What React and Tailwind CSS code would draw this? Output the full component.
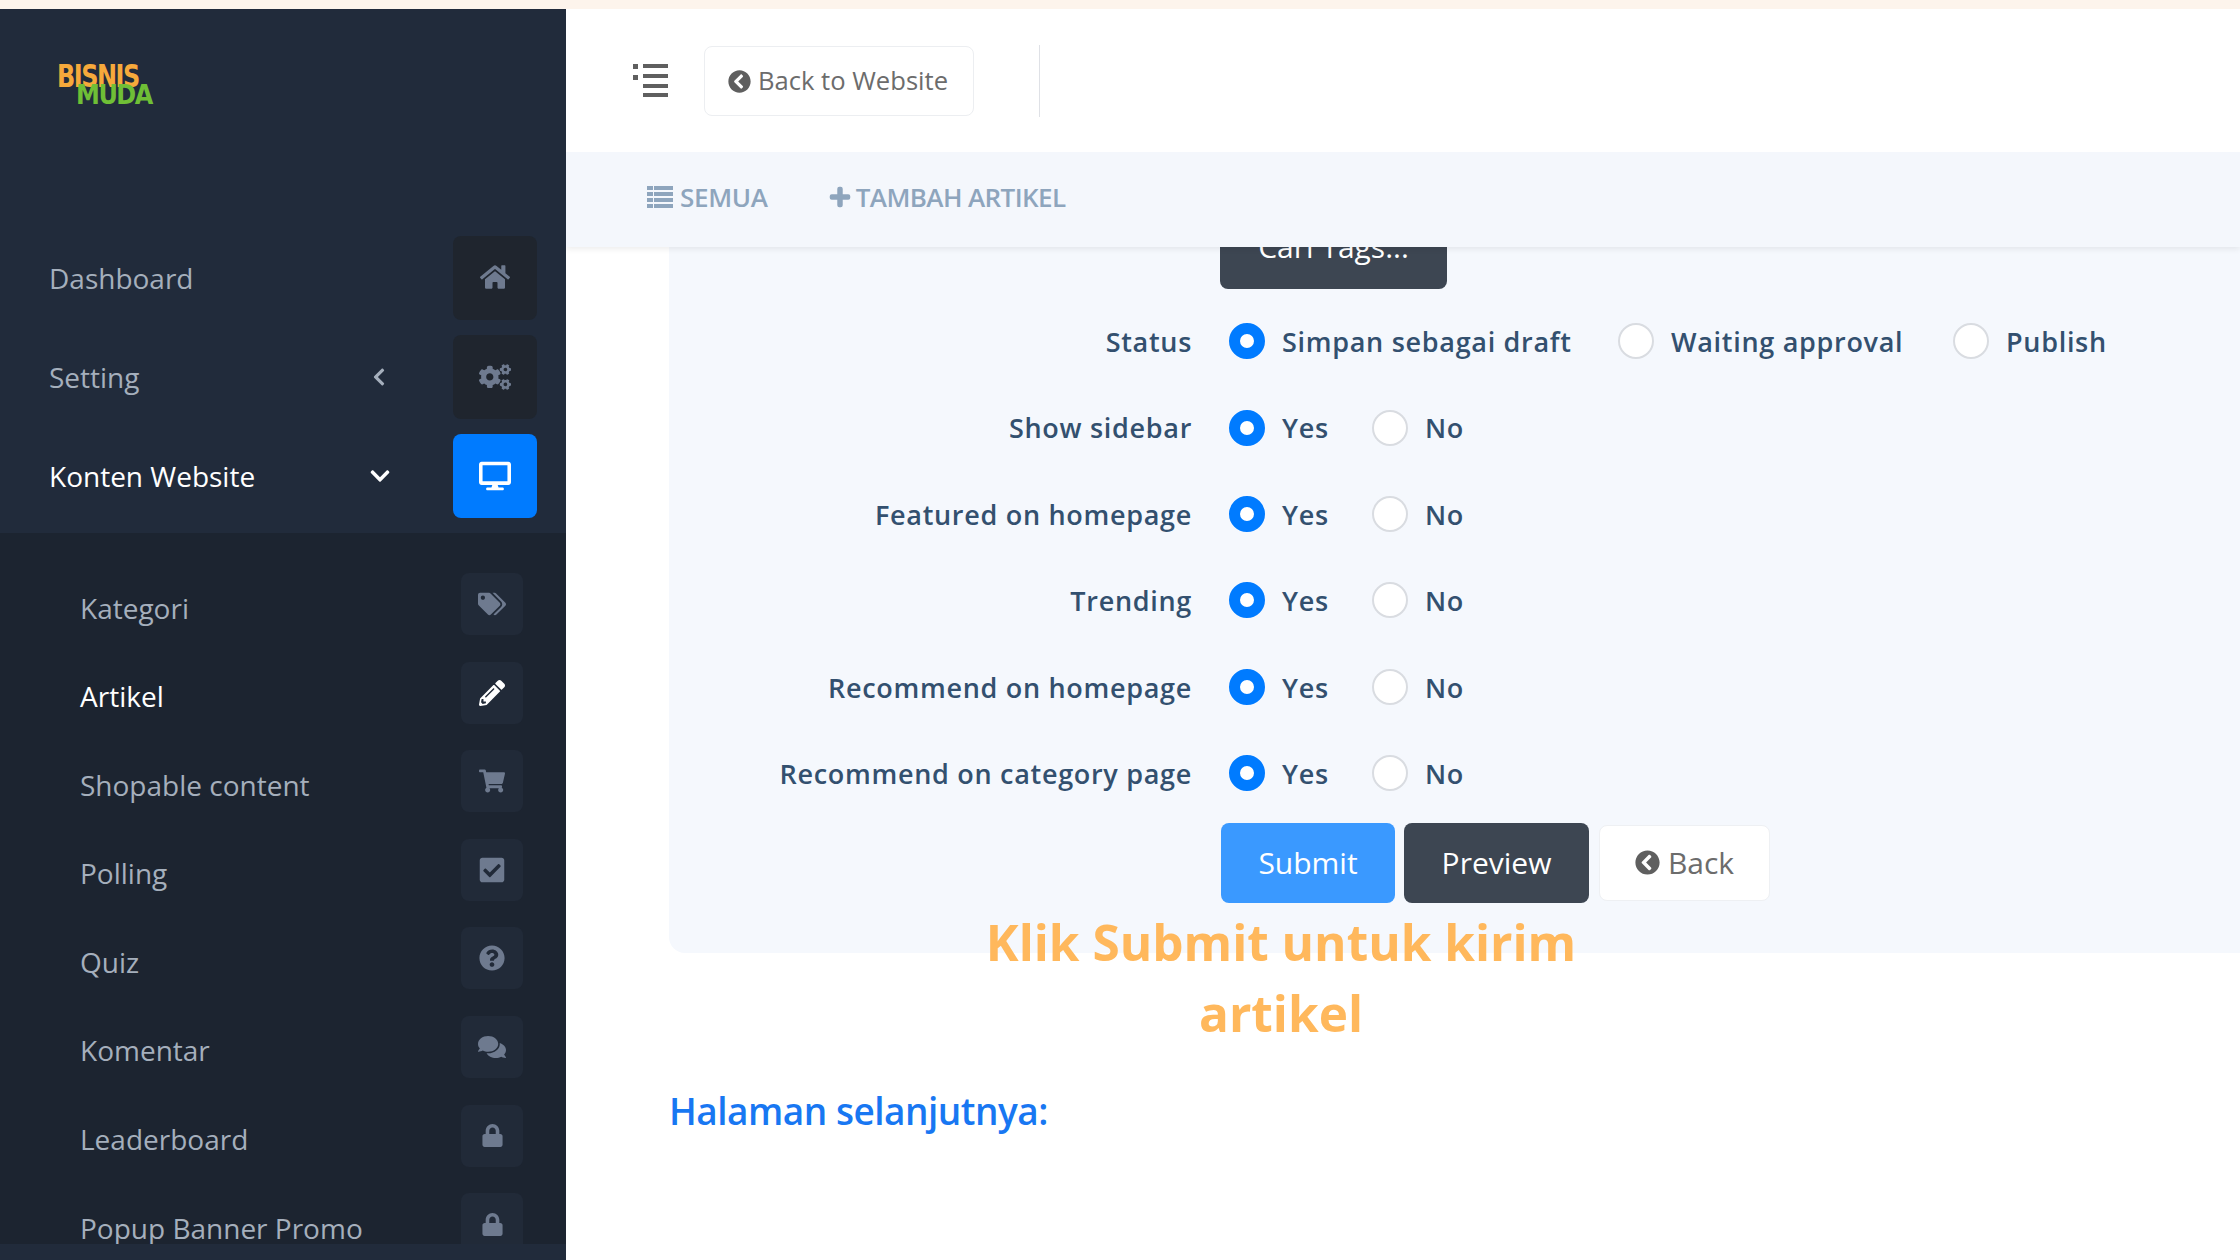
import React from 'react';
import { FaHome, FaCogs, FaDesktop, FaTags, FaPencilAlt, FaShoppingCart, FaCheckSquare, FaQuestionCircle, FaComments, FaLock, FaChevronCircleLeft, FaChevronLeft, FaChevronDown, FaPlus } from 'react-icons/fa';

const font = { fontFamily: '"Open Sans", sans-serif' };

function TopItem({ label, icon: Icon, active, chevron, iconClass = 'text-[32px]' }) {
  return (
    <div className="flex items-center h-[84px] mb-[15px] pl-[49px] pr-[29px]">
      <span className={`flex-1 text-[28px] ${active ? 'text-white' : 'text-[#a5afbc]'}`}>{label}</span>
      {chevron === 'left' && <FaChevronLeft className="text-[#a5afbc] text-[20px] mr-[64px]" />}
      {chevron === 'down' && <FaChevronDown className="text-white text-[22px] mr-[62px]" />}
      <span className={`w-[84px] h-[84px] rounded-lg flex items-center justify-center ${active ? 'bg-[#007bff] text-white' : 'bg-[#1f252e] text-[#6e7a8f]'}`}>
        <Icon className={iconClass} />
      </span>
    </div>
  );
}

function SubItem({ label, icon: Icon, active, iconClass = 'text-[28px]' }) {
  return (
    <div className="flex items-center h-[62px] mb-[26.6px] pl-[80px] pr-[43px]">
      <span className={`flex-1 text-[28px] pt-[7px] ${active ? 'text-white' : 'text-[#a5afbc]'}`}>{label}</span>
      <span className={`w-[62px] h-[62px] rounded-lg bg-[#212a38] flex items-center justify-center ${active ? 'text-white' : 'text-[#6e7a8f]'}`}>
        <Icon className={iconClass} />
      </span>
    </div>
  );
}

function Radio({ checked, label, className = '' }) {
  return (
    <label className={`flex items-center ${className}`}>
      <input
        type="radio"
        readOnly
        checked={!!checked}
        className={`appearance-none w-9 h-9 rounded-full mr-[17px] ${checked ? 'border-[11px] border-[#007bff] bg-white' : 'border-2 border-[#d9dce1] bg-white'}`}
      />
      <span className="pt-[2px]">{label}</span>
    </label>
  );
}

function Row({ label, children }) {
  return (
    <div className="flex items-center h-[86.4px] text-[27px] font-semibold text-[#33506f] tracking-[0.7px]">
      <span className="w-[523px] text-right mr-[37px] pt-[2px]">{label}</span>
      {children}
    </div>
  );
}

function YesNo({ label }) {
  return (
    <Row label={label}>
      <Radio checked label="Yes" className="w-[143px]" />
      <Radio label="No" />
    </Row>
  );
}

export default function App() {
  return (
    <div className="w-[2240px] h-[1260px] overflow-hidden flex flex-col bg-white" style={font}>
      <div className="h-[9px] bg-[#fdf4ec] shrink-0" />
      <div className="flex-1 flex min-h-0">
        <aside className="w-[566px] shrink-0 bg-[#212b3b] flex flex-col overflow-hidden">
          <div className="h-[227px] pl-[57px] pt-[51px]">
            <div className="font-black" style={{ fontFamily: '"DejaVu Sans", sans-serif' }}>
              <div className="text-[#f6a93b] text-[24px] leading-[27px] tracking-[-1.5px] scale-y-[1.3] origin-top-left">BISNIS</div>
              <div className="text-[#6fbf36] text-[24px] leading-[21px] -mt-[3px] ml-[19px] tracking-[-1.5px] scale-y-[1.1] origin-top-left">MUDA</div>
            </div>
          </div>
          <TopItem label="Dashboard" icon={FaHome} iconClass="text-[30px] -mt-[3px]" />
          <TopItem label="Setting" icon={FaCogs} chevron="left" />
          <TopItem label="Konten Website" icon={FaDesktop} active chevron="down" />
          <div className="bg-[#1c2430] h-[711px] pt-[40px] overflow-hidden shrink-0">
            <SubItem label="Kategori" icon={FaTags} />
            <SubItem label="Artikel" icon={FaPencilAlt} active iconClass="text-[26px]" />
            <SubItem label="Shopable content" icon={FaShoppingCart} iconClass="text-[26px]" />
            <SubItem label="Polling" icon={FaCheckSquare} />
            <SubItem label="Quiz" icon={FaQuestionCircle} iconClass="text-[26px]" />
            <SubItem label="Komentar" icon={FaComments} />
            <SubItem label="Leaderboard" icon={FaLock} iconClass="text-[23px]" />
            <SubItem label="Popup Banner Promo" icon={FaLock} iconClass="text-[23px]" />
          </div>
        </aside>

        <main className="flex-1 flex flex-col min-w-0 overflow-hidden">
          <header className="h-[143px] shrink-0 bg-white flex items-center pl-[67px] relative z-20">
            <svg width="36" height="36" viewBox="0 0 36 36" className="mr-[35px] -mt-[2px] text-[#5f5f5f]" fill="currentColor">
              <rect x="0" y="2" width="5" height="5" />
              <rect x="0" y="13" width="5" height="5" />
              <rect x="10" y="2" width="25" height="4" />
              <rect x="10" y="12" width="25" height="4" />
              <rect x="10" y="22" width="25" height="4" />
              <rect x="10" y="31" width="25" height="4" />
            </svg>
            <button className="w-[270px] h-[70px] border border-[#eceef1] rounded-lg flex items-center justify-center text-[25.6px] text-[#6c6c6c] pt-[1px] pr-[2px]">
              <FaChevronCircleLeft className="text-[23px] mr-[7px] text-[#5f5f5f]" />
              Back to Website
            </button>
            <div className="w-px h-[72px] bg-[#dfe1e6] ml-[65px]" />
          </header>
          <nav className="h-[95px] shrink-0 bg-[#f4f7fc] flex items-center pl-[81px] pb-[5px] text-[26px] font-semibold text-[#8ea5bd] relative z-10 shadow-[0_2px_6px_rgba(0,0,0,0.08)]" style={{ letterSpacing: '-0.3px' }}>
            <svg width="26" height="24" viewBox="0 0 26 24" fill="currentColor" className="mr-[7px]">
              <rect x="0" y="1" width="6" height="4" />
              <rect x="0" y="7" width="6" height="4" />
              <rect x="0" y="13" width="6" height="4" />
              <rect x="0" y="19" width="6" height="4" />
              <rect x="7" y="1" width="19" height="4" />
              <rect x="7" y="7" width="19" height="4" />
              <rect x="7" y="13" width="19" height="4" />
              <rect x="7" y="19" width="19" height="4" />
            </svg>
            <span className="mr-[61px]">SEMUA</span>
            <FaPlus className="text-[22px] mr-[5px]" stroke="currentColor" strokeWidth={30} />
            <span className="tracking-[-0.6px]">TAMBAH ARTIKEL</span>
          </nav>
          <div className="flex-1 relative pl-[103px] min-h-0">
            <section className="bg-[#f5f8fd] rounded-bl-2xl h-[744px] -mt-[38px] pt-[1px]">
              <div className="pl-[551px]">
                <button className="w-[227px] h-[80px] bg-[#3d4652] rounded-lg text-white text-[30px] flex items-center justify-center -mt-[1px] pb-[6px]">
                  Cari Tags...
                </button>
              </div>
              <div className="pt-[9px]">
                <Row label="Status">
                  <Radio checked label="Simpan sebagai draft" className="w-[389px]" />
                  <Radio label="Waiting approval" className="w-[335px]" />
                  <Radio label="Publish" />
                </Row>
                <YesNo label="Show sidebar" />
                <YesNo label="Featured on homepage" />
                <YesNo label="Trending" />
                <YesNo label="Recommend on homepage" />
                <YesNo label="Recommend on category page" />
              </div>
              <div className="flex items-center pl-[552px] pt-[7px]">
                <button className="w-[174px] h-[80px] bg-[#3a99ff] rounded-lg text-white text-[30px] font-medium pb-[2px]">Submit</button>
                <button className="w-[185px] h-[80px] bg-[#3d4652] rounded-lg text-white text-[30px] font-medium ml-[9px] pb-[2px]">Preview</button>
                <button className="w-[171px] h-[76px] bg-white rounded-lg border border-[#eef0f3] text-[#6c6c6c] text-[30px] ml-[10px] flex items-center justify-center pb-[2px]">
                  <FaChevronCircleLeft className="text-[25px] mr-[8px] text-[#5f5f5f]" />
                  Back
                </button>
              </div>
            </section>
            <h2 className="text-[#1877f2] text-[37px] font-semibold mt-[132px] leading-[52px] tracking-[-0.5px]">Halaman selanjutnya:</h2>
            <p className="absolute left-[395px] top-[660px] w-[640px] text-center text-[#ffb85c] text-[49.5px] font-bold leading-[71px]">
              Klik Submit untuk kirim artikel
            </p>
          </div>
        </main>
      </div>
    </div>
  );
}
